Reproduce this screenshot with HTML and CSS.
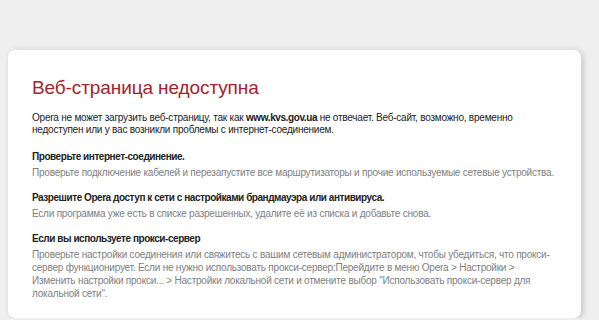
FILE: index.html
```html
<!DOCTYPE html>
<html lang="ru">
<head>
    <meta charset="UTF-8">
    <title>Веб-страница недоступна</title>
    <link rel="stylesheet" href="styles.css">
</head>
<body>
    <div class="error-page">
        <h1 class="error-title">Веб-страница недоступна</h1>
        <p class="intro">Opera не может загрузить веб-страницу, так как <strong>www.kvs.gov.ua</strong> не отвечает. Веб-сайт, возможно, временно недоступен или у вас возникли проблемы с интернет-соединением.</p>

        <div class="tip">
            <h2>Проверьте интернет-соединение.</h2>
            <p>Проверьте подключение кабелей и перезапустите все маршрутизаторы и прочие используемые сетевые устройства.</p>
        </div>

        <div class="tip">
            <h2>Разрешите Opera доступ к сети с настройками брандмауэра или антивируса.</h2>
            <p>Если программа уже есть в списке разрешенных, удалите её из списка и добавьте снова.</p>
        </div>

        <div class="tip">
            <h2>Если вы используете прокси-сервер</h2>
            <p>Проверьте настройки соединения или свяжитесь с вашим сетевым администратором, чтобы убедиться, что прокси-сервер функционирует. Если не нужно использовать прокси-сервер:Перейдите в меню Opera &gt; Настройки &gt; Изменить настройки прокси... &gt; Настройки локальной сети и отмените выбор "Использовать прокси-сервер для локальной сети".</p>
        </div>
    </div>
</body>
</html>
```

FILE: styles.css
```css
body {
    margin: 0;
    padding: 50px 0 0 8px;
    background-color: #efefef;
    font-family: "Liberation Sans", Arial, sans-serif;
    font-size: 10px;
    letter-spacing: -0.22px;
    color: #222;
    overflow: hidden;
}
.error-page {
    width: 522px;
    height: 242px;
    padding: 26px 27px 0 24px;
    box-sizing: content-box;
    background-color: white;
    border-radius: 7px;
    box-shadow: 2px 1px 6px rgba(0, 0, 0, 0.18);
}
.error-title {
    margin: 0 0 12px 0;
    font-size: 19px;
    font-weight: normal;
    letter-spacing: -0.1px;
    color: #a1242c;
    line-height: 24px;
}
.intro {
    margin: 0 0 14px 0;
    line-height: 12px;
}
.intro strong {
    letter-spacing: -0.4px;
}
.tip {
    margin-bottom: 12px;
}
.tip h2 {
    margin: 0 0 2px 0;
    font-size: 10px;
    font-weight: bold;
    letter-spacing: -0.45px;
    line-height: 14px;
}
.tip p {
    margin: 0;
    color: #808080;
    line-height: 13px;
}
```
